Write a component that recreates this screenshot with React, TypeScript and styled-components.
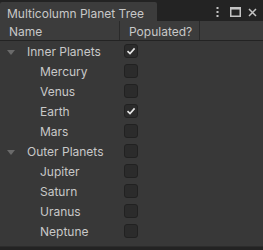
import React, { useState } from 'react'
import styled, { createGlobalStyle } from 'styled-components'

const GlobalStyle = createGlobalStyle`
  html, body {
    margin: 0;
    padding: 0;
    background: #191919;
  }
  body {
    font-family: Inter, "Noto Sans", sans-serif;
  }
`

const Window = styled.div`
  width: 263px;
  height: 250px;
  display: flex;
  flex-direction: column;
  background: #383838;
  overflow: hidden;
  box-sizing: border-box;
`

const TabBar = styled.div`
  display: flex;
  align-items: stretch;
  height: 21px;
  padding-top: 2px;
  box-sizing: border-box;
  background: #232323;
`

const Tab = styled.div`
  width: 157px;
  display: flex;
  align-items: center;
  padding: 3px 0 0 7px;
  box-sizing: border-box;
  background: #3c3c3c;
  color: #c8c8c8;
  font-size: 12px;
  border-radius: 2px 2px 0 0;
`

const TabTools = styled.div`
  flex: 1;
  display: flex;
  justify-content: flex-end;
  align-items: center;
  padding: 1px 6px 0 0;
`

const ToolIcon = styled.svg<{ gap: number }>`
  display: block;
  margin-left: ${(p) => p.gap}px;
`

const Header = styled.div`
  display: grid;
  grid-template-columns: 120px 80px 1fr;
  height: 20px;
  box-sizing: border-box;
  background: #3c3c3c;
  border-bottom: 1px solid #232323;
`

const HeaderCell = styled.div`
  display: flex;
  align-items: center;
  padding: 2px 0 0 9px;
  color: #c8c8c8;
  font-size: 12px;
  border-right: 1px solid #2a2a2a;
`

const Body = styled.div`
  flex: 1;
  display: flex;
  flex-direction: column;
`

const Row = styled.div`
  display: grid;
  grid-template-columns: 120px 1fr;
  height: 20px;
  align-items: center;
`

const NameCell = styled.div<{ depth: number }>`
  display: flex;
  align-items: center;
  padding-left: ${(p) => (p.depth === 0 ? 7 : 40)}px;
  color: #c8c8c8;
  font-size: 12px;
`

const Arrow = styled.span`
  width: 0;
  height: 0;
  border-left: 4.5px solid transparent;
  border-right: 4.5px solid transparent;
  border-top: 5px solid #6a6a6a;
  margin: 3px 12px 0 0;
`

const Check = styled.div`
  width: 14px;
  height: 14px;
  margin-left: 4px;
  box-sizing: border-box;
  border-radius: 3px;
  background: #2b2b2b;
  border: 1px solid #212121;
  display: flex;
  align-items: center;
  justify-content: center;
  cursor: pointer;
`

const Footer = styled.div`
  height: 3px;
  background: #232323;
  border-top: 1px solid #2c2c2c;
`

type Planet = { name: string; populated: boolean }
type Group = { name: string; populated: boolean; children: Planet[] }

const DATA: Group[] = [
  {
    name: 'Inner Planets',
    populated: true,
    children: [
      { name: 'Mercury', populated: false },
      { name: 'Venus', populated: false },
      { name: 'Earth', populated: true },
      { name: 'Mars', populated: false },
    ],
  },
  {
    name: 'Outer Planets',
    populated: false,
    children: [
      { name: 'Jupiter', populated: false },
      { name: 'Saturn', populated: false },
      { name: 'Uranus', populated: false },
      { name: 'Neptune', populated: false },
    ],
  },
]

const Tick = () => (
  <svg width='10' height='10' viewBox='0 0 10 10'>
    <path d='M1.5 5.2 L4 7.6 L8.6 2.4' fill='none' stroke='#e6e6e6' strokeWidth='1.6' />
  </svg>
)

const Toggle = ({ on }: { on: boolean }) => {
  const [checked, setChecked] = useState(on)
  return <Check onClick={() => setChecked(!checked)}>{checked && <Tick />}</Check>
}

export default function App() {
  return (
    <>
      <GlobalStyle />
      <Window>
        <TabBar>
          <Tab>Multicolumn Planet Tree</Tab>
          <TabTools>
            <ToolIcon gap={0} width='3' height='10' viewBox='0 0 3 10'>
              <rect x='0.5' y='0' width='2' height='2' fill='#c4c4c4' />
              <rect x='0.5' y='4' width='2' height='2' fill='#c4c4c4' />
              <rect x='0.5' y='8' width='2' height='2' fill='#c4c4c4' />
            </ToolIcon>
            <ToolIcon gap={11} width='11' height='10' viewBox='0 0 11 10'>
              <rect x='0.75' y='0.75' width='9.5' height='8.5' fill='none' stroke='#c4c4c4' strokeWidth='1.5' />
              <rect x='0.75' y='0.75' width='9.5' height='1.8' fill='#c4c4c4' />
            </ToolIcon>
            <ToolIcon gap={7} width='9' height='9' viewBox='0 0 9 9'>
              <path d='M1 1 L8 8 M8 1 L1 8' stroke='#c4c4c4' strokeWidth='1.5' />
            </ToolIcon>
          </TabTools>
        </TabBar>
        <Header>
          <HeaderCell>Name</HeaderCell>
          <HeaderCell>Populated?</HeaderCell>
          <div />
        </Header>
        <Body>
          {DATA.map((group) => (
            <React.Fragment key={group.name}>
              <Row>
                <NameCell depth={0}>
                  <Arrow />
                  {group.name}
                </NameCell>
                <Toggle on={group.populated} />
              </Row>
              {group.children.map((planet) => (
                <Row key={planet.name}>
                  <NameCell depth={1}>{planet.name}</NameCell>
                  <Toggle on={planet.populated} />
                </Row>
              ))}
            </React.Fragment>
          ))}
        </Body>
        <Footer />
      </Window>
    </>
  )
}
